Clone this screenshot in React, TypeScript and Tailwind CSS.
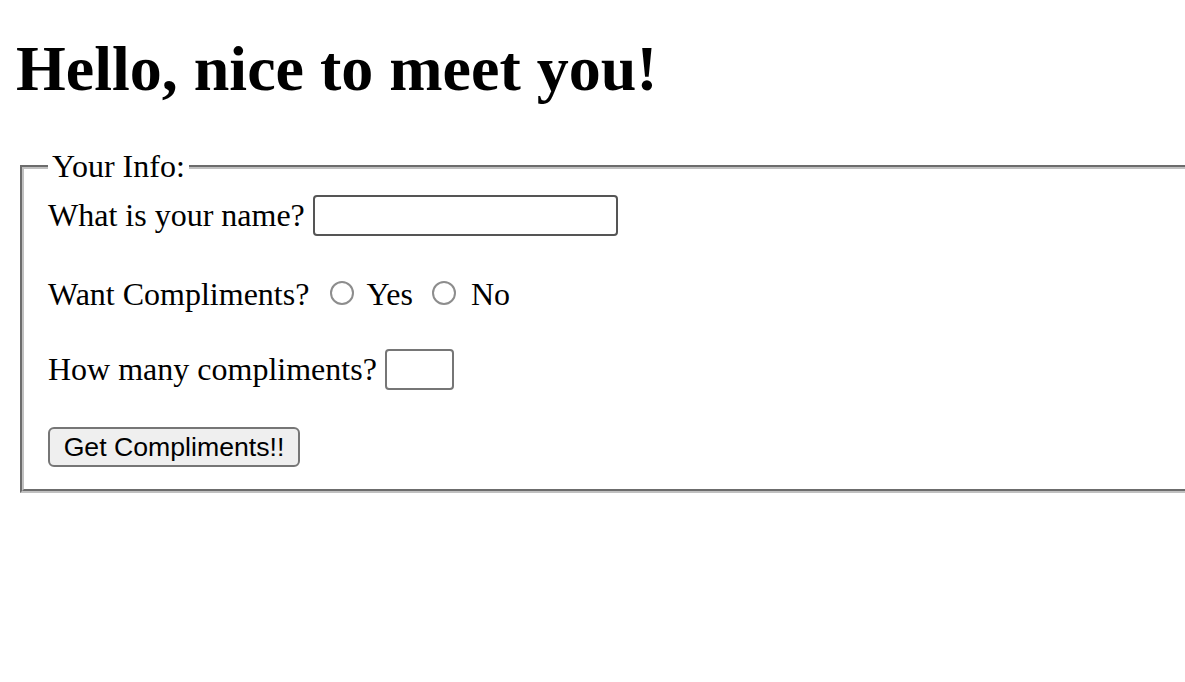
import React from "react";

export default function App() {
  return (
    <div className="w-[1185px] h-[682px] overflow-hidden bg-white text-black font-['Liberation_Serif',serif] text-[32px]">
      <h1 className="ml-[16px] mt-[33px] text-[64px] font-bold leading-[71px] whitespace-nowrap">
        Hello, nice to meet you!
      </h1>
      <fieldset className="ml-[20px] mt-[44px] w-[1300px] border-[4px] [border-style:groove] border-[#c0c0c0] px-[24px] pb-[22px]">
        <legend className="px-[4px] leading-[37px]">Your Info:</legend>
        <div className="mt-[10px] flex h-[40px] items-center">
          <span className="leading-[37px]">What is your name?</span>
          <input
            type="text"
            className="ml-[8px] h-[41px] w-[305px] rounded-[4px] border-2 border-[#555555] bg-white px-1 outline-none"
          />
        </div>
        <div className="mt-[41px] flex h-[37px] items-center">
          <span className="leading-[37px]">Want Compliments?</span>
          <input
            type="radio"
            name="want"
            className="ml-[21px] mr-[12px] mt-[-3px] h-[24px] w-[24px] appearance-none rounded-full border-2 border-[#8d8d8d] bg-white"
          />
          <span className="leading-[37px]">Yes</span>
          <input
            type="radio"
            name="want"
            className="ml-[19px] mr-[15px] mt-[-3px] h-[24px] w-[24px] appearance-none rounded-full border-2 border-[#8d8d8d] bg-white"
          />
          <span className="leading-[37px]">No</span>
        </div>
        <div className="mt-[36px] flex h-[40px] items-center">
          <span className="leading-[37px]">How many compliments?</span>
          <input
            type="number"
            className="ml-[8px] h-[41px] w-[69px] rounded-[4px] border-2 border-[#767676] bg-white px-1 outline-none"
          />
        </div>
        <div className="mt-[38px] flex">
          <button
            type="button"
            className="h-[40px] w-[252px] rounded-[6px] border-2 border-[#767676] bg-[#efefef] font-['Liberation_Sans',Arial,sans-serif] text-[26.67px] leading-none text-black"
          >
            Get Compliments!!
          </button>
        </div>
      </fieldset>
    </div>
  );
}
